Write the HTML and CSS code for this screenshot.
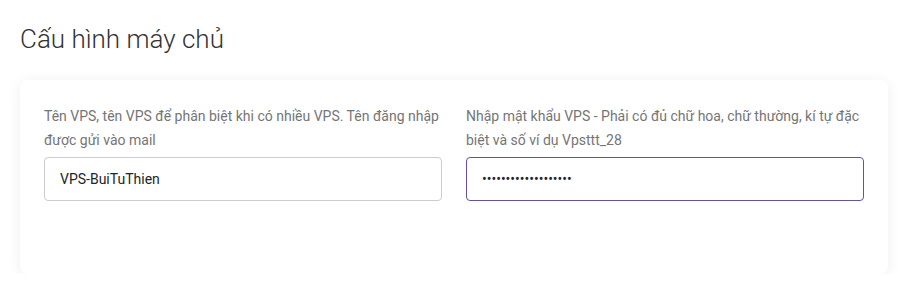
FILE: index.html
```html
<!DOCTYPE html>
<html lang="vi">
<head>
<meta charset="utf-8">
<link rel="stylesheet" href="styles.css">
</head>
<body>
<div class="page">
  <h2 class="title">Cấu hình máy chủ</h2>
  <div class="card">
    <div class="row">
      <div class="col">
        <label class="label">Tên VPS, tên VPS để phân biệt khi có nhiều VPS. Tên đăng nhập được gửi vào mail</label>
        <input class="input" type="text" value="VPS-BuiTuThien">
      </div>
      <div class="col">
        <label class="label">Nhập mật khẩu VPS - Phải có đủ chữ hoa, chữ thường, kí tự đặc biệt và số ví dụ Vpsttt_28</label>
        <input class="input focused" type="password" value="Vpsttt_28Vpsttt_28a">
      </div>
    </div>
  </div>
</div>
</body>
</html>
```
FILE: styles.css
```css
html, body {
  margin: 0;
  padding: 0;
  background: #ffffff;
}
body {
  font-family: Roboto, "Liberation Sans", sans-serif;
  color: #212529;
}
.page {
  padding: 0 10px 0 20px;
}
.title {
  margin: 0;
  padding-top: 24px;
  height: 80px;
  box-sizing: border-box;
  font-size: 26px;
  font-weight: 300;
  line-height: 30px;
  color: #333333;
}
.card {
  background: #ffffff;
  border-radius: 8px;
  box-shadow: 0 2px 14px rgba(0, 0, 0, 0.07);
  padding: 24px 24px 73px;
  width: 868px;
  box-sizing: border-box;
}
.row {
  display: grid;
  grid-template-columns: 1fr 1fr;
  column-gap: 24px;
}
.col {
  display: flex;
  flex-direction: column;
}
.label {
  font-size: 14px;
  line-height: 24px;
  color: #757575;
  margin-bottom: 5px;
}
.input {
  height: 44px;
  box-sizing: border-box;
  border: 1px solid #cccccc;
  border-radius: 4px;
  padding: 0 15px;
  font-family: Roboto, "Liberation Sans", sans-serif;
  font-size: 14px;
  color: #212529;
  background: #fff;
  outline: none;
}
.input.focused {
  border-color: #6552a0;
}
```
